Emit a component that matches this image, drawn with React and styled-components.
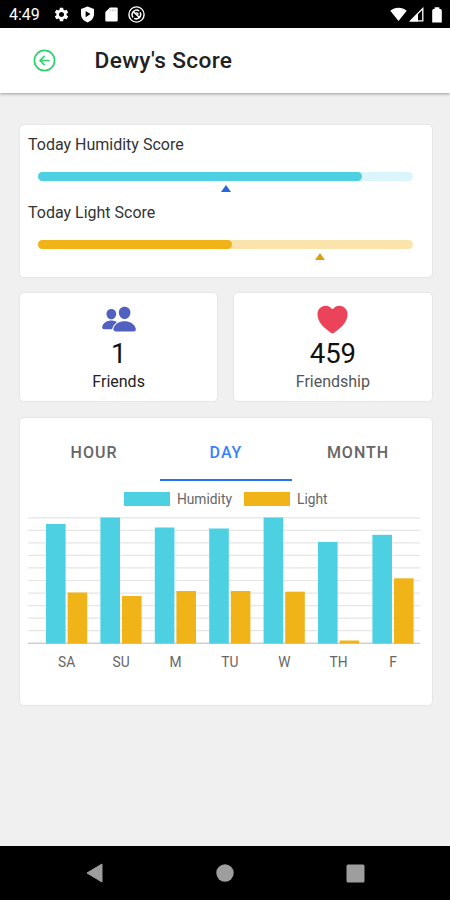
import styled, { createGlobalStyle } from 'styled-components';
import { IoArrowBackCircleOutline, IoHeart, IoPeople } from 'react-icons/io5';
import { MdSettings } from 'react-icons/md';

const GlobalStyle = createGlobalStyle`
	* {
		box-sizing: border-box;
	}

	body {
		margin: 0;
		background-color: #f0f0f0;
		font-family: Roboto, sans-serif;
		color: #222;
	}
`;

const Screen = styled.div`
	display: flex;
	flex-direction: column;
	width: 450px;
	height: 900px;
	background-color: #f0f0f0;
	overflow: hidden;
`;

const StatusBar = styled.div`
	display: flex;
	justify-content: space-between;
	height: 28px;
	padding: 0 8px 0 9px;
	background-color: #000;
	color: #fff;
`;

const StatusGroup = styled.div`
	display: flex;
	align-items: center;
	gap: ${props => props.$gap};
	padding-top: 1px;

	svg {
		display: block;
	}
`;

const Clock = styled.span`
	width: 33px;
	margin-right: 1px;
	font-size: 16px;
	font-weight: 400;
	white-space: nowrap;
`;

const Header = styled.header`
	display: flex;
	align-items: center;
	gap: 37px;
	height: 65px;
	flex-shrink: 0;
	padding: 0 0 1px 30.5px;
	background-color: #fff;
	box-shadow: 0 1px 3px rgba(0, 0, 0, 0.35);
`;

const BackButton = styled.button`
	display: flex;
	padding: 0;
	border: none;
	background: none;
	color: #2dd36f;
`;

const Title = styled.h1`
	margin: 0;
	font-size: 22.7px;
	font-weight: 500;
	letter-spacing: 0.35px;
	color: #222;
`;

const Content = styled.main`
	display: flex;
	flex-direction: column;
	gap: 15px;
	flex: 1;
	padding: 31px 17.5px 0 19px;
`;

const Card = styled.section`
	background-color: #fff;
	border: 1px solid #e4e6e7;
	border-radius: 5px;
`;

const ScoreCard = styled(Card)`
	height: 154px;
	margin-bottom: -1px;
	padding: 10px 18.5px 0 8px;
`;

const Score = styled.div`
	height: 67.5px;
`;

const ScoreLabel = styled.p`
	margin: 0;
	font-size: 16px;
	line-height: 20px;
	color: #333;
`;

const Track = styled.div`
	height: 9px;
	margin: 17px 0 0 10px;
	border-radius: 5px;
	background-color: ${props => props.$color};
`;

const Fill = styled.div`
	height: 100%;
	border-radius: 5px;
	background-color: ${props => props.$color};
`;

const MarkerRow = styled.div`
	display: flex;
	justify-content: center;
	width: ${props => props.$width};
	margin: 4px 0 0 10px;
`;

const Marker = styled.span`
	border: 5.5px solid transparent;
	border-top: 0;
	border-bottom: 7px solid ${props => props.$color};
`;

const StatRow = styled.div`
	display: grid;
	grid-template-columns: 1fr 1fr;
	gap: 15px;
`;

const StatCard = styled(Card)`
	display: flex;
	flex-direction: column;
	align-items: center;
	height: 110px;
	padding-top: 7px;
`;

const StatIcon = styled.div`
	display: flex;
	align-items: center;
	height: 38px;
	color: ${props => props.$color};
`;

const StatValue = styled.p`
	margin: 0;
	font-size: 27.5px;
	line-height: 32px;
	color: #111;
`;

const StatLabel = styled.p`
	margin: 2px 0 0;
	font-size: 16px;
	line-height: 20px;
	color: ${props => props.$color};
`;

const ChartCard = styled(Card)`
	height: 289px;
	padding: 8px 8px 0;
`;

const Tabs = styled.div`
	display: grid;
	grid-template-columns: repeat(3, 132px);
	height: 55px;
`;

const Tab = styled.button`
	padding: 0;
	border: none;
	border-bottom: 2px solid ${props => (props.$active ? '#2673f5' : 'transparent')};
	background: none;
	font-family: inherit;
	font-size: 16px;
	font-weight: 500;
	letter-spacing: 1px;
	color: ${props => (props.$active ? '#3880ff' : '#666')};
`;

const Legend = styled.div`
	display: flex;
	justify-content: center;
	gap: 12px;
	height: 36px;
	padding-top: 10px;
`;

const LegendItem = styled.div`
	display: flex;
	align-items: center;
	gap: 7px;
	height: 16px;
	font-size: 13.8px;
	color: #666;
`;

const Swatch = styled.span`
	width: 46px;
	height: 14px;
	background-color: ${props => props.$color};
`;

const Plot = styled.svg`
	display: block;
`;

const Days = styled.div`
	display: grid;
	grid-template-columns: repeat(7, 54.4px);
	margin: 9px 0 0 11.5px;
	font-size: 13.8px;
	line-height: 18px;
	text-align: center;
	color: #666;
`;

const NavBar = styled.nav`
	display: flex;
	align-items: center;
	justify-content: space-between;
	height: 54px;
	padding: 0 85px 0 86px;
	background-color: #000;
	color: #9e9e9e;
`;

const HUMIDITY = '#4dd0e1';
const LIGHT = '#f0b419';

// bar heights in pixels, the axis is 126 high
const week = [
	{ day: 'SA', humidity: 119.5, light: 51 },
	{ day: 'SU', humidity: 126, light: 47.5 },
	{ day: 'M', humidity: 116, light: 52.5 },
	{ day: 'TU', humidity: 115, light: 52.5 },
	{ day: 'W', humidity: 126, light: 51.8 },
	{ day: 'TH', humidity: 101.5, light: 3 },
	{ day: 'F', humidity: 108.7, light: 65.2 },
];

const scores = [
	{
		label: 'Today Humidity Score',
		fill: '86.3%',
		marker: '375px',
		color: '#4dd0e1',
		track: '#dbf6fa',
		markerColor: '#2468dc',
	},
	{
		label: 'Today Light Score',
		fill: '51.8%',
		marker: '563px',
		color: '#f0b419',
		track: '#fae4ab',
		markerColor: '#d9a012',
	},
];

function ShieldIcon() {
	return (
		<svg width='15' height='17' viewBox='0 0 15 17'>
			<path d='M7.5 .5 14 3v5c0 4-2.700 7-6.500 8.500C3.700 15 1 12 1 8V3z' fill='#fff' />
			<path d='M5.600 5v6.200l4.900-3.100z' fill='#000' />
		</svg>
	);
}

function StorageIcon() {
	return (
		<svg width='13' height='15' viewBox='0 0 13 15'>
			<path d='M5 .5h6.500a1.200 1.200 0 0 1 1.200 1.200v11.600a1.200 1.200 0 0 1-1.200 1.200h-10A1.200 1.200 0 0 1 .3 13.300V5z' fill='#fff' />
			<path d='M5.300 2.300v2M7.700 2.300v2M10 2.300v2' stroke='#999' strokeWidth='.7' />
		</svg>
	);
}

function SyncIcon() {
	return (
		<svg width='17' height='17' viewBox='0 0 17 17' fill='none' stroke='#fff'>
			<circle cx='8.500' cy='8.500' r='7.600' strokeWidth='1.400' />
			<path d='M5 11.500A4.600 4.600 0 0 1 11.300 5M12.200 6.200A4.600 4.600 0 0 1 6.200 12.400' strokeWidth='1.500' />
			<path d='M5 5.500l7 6.500M7.200 7.400c1.300-.9 3-.3 3 1.400' strokeWidth='1.400' />
		</svg>
	);
}

function Chart() {
	return (
		<Plot width='392' height='127' viewBox='0 0 392 127'>
			{Array.from({ length: 11 }, (_, i) => (
				<path
					key={i}
					d={`M0 ${0.8 + i * 12.54}H392`}
					stroke={i === 10 ? '#cfcfcf' : '#e5e5e5'}
					strokeWidth={i === 10 ? 1.6 : 1.2}
				/>
			))}
			{week.map(({ day, humidity, light }, i) => (
				<g key={day}>
					<rect x={18 + i * 54.4} y={126.5 - humidity} width='19.6' height={humidity} fill={HUMIDITY} />
					<rect x={39.6 + i * 54.4} y={126.5 - light} width='19.6' height={light} fill={LIGHT} />
				</g>
			))}
		</Plot>
	);
}

function App() {
	return (
		<Screen>
			<GlobalStyle />
			<StatusBar>
				<StatusGroup $gap='10px'>
					<Clock>4:49</Clock>
					<MdSettings size={17} />
					<ShieldIcon />
					<StorageIcon />
					<SyncIcon />
				</StatusGroup>
				<StatusGroup $gap='2px'>
					<svg width='17' height='15' viewBox='0 0 18 15'>
						<path d='M.3 3.500C5 -.6 13 -.6 17.700 3.500L9 14.500z' fill='#fff' />
					</svg>
					<svg width='21' height='15' viewBox='0 0 21 15'>
						<path d='M13.800 1.500v12.400H1.500z' fill='none' stroke='#fff' strokeWidth='1.300' />
						<path d='M1 14.500 9 6.500V14.500z' fill='#fff' />
					</svg>
					<svg width='10' height='16' viewBox='0 0 10 16'>
						<path d='M2.700 1.800V.3h4.600v1.500c1.500 0 2.500.8 2.500 2.200v11.500H.2V4c0-1.400 1-2.200 2.500-2.200z' fill='#fff' />
					</svg>
				</StatusGroup>
			</StatusBar>

			<Header>
				<BackButton aria-label='Back'>
					<IoArrowBackCircleOutline size={27} />
				</BackButton>
				<Title>Dewy's Score</Title>
			</Header>

			<Content>
				<ScoreCard>
					{scores.map(score => (
						<Score key={score.label}>
							<ScoreLabel>{score.label}</ScoreLabel>
							<Track $color={score.track}>
								<Fill $color={score.color} style={{ width: score.fill }} />
							</Track>
							<MarkerRow $width={score.marker}>
								<Marker $color={score.markerColor} />
							</MarkerRow>
						</Score>
					))}
				</ScoreCard>

				<StatRow>
					<StatCard>
						<StatIcon $color='#5260c0'>
							<IoPeople size={36} />
						</StatIcon>
						<StatValue>1</StatValue>
						<StatLabel $color='#222'>Friends</StatLabel>
					</StatCard>
					<StatCard>
						<StatIcon $color='#eb445a'>
							<IoHeart size={37} />
						</StatIcon>
						<StatValue>459</StatValue>
						<StatLabel $color='#555'>Friendship</StatLabel>
					</StatCard>
				</StatRow>

				<ChartCard>
					<Tabs>
						<Tab>HOUR</Tab>
						<Tab $active>DAY</Tab>
						<Tab>MONTH</Tab>
					</Tabs>
					<Legend>
						<LegendItem>
							<Swatch $color={HUMIDITY} />
							Humidity
						</LegendItem>
						<LegendItem>
							<Swatch $color={LIGHT} />
							Light
						</LegendItem>
					</Legend>
					<Chart />
					<Days>
						{week.map(({ day }) => (
							<span key={day}>{day}</span>
						))}
					</Days>
				</ChartCard>
			</Content>

			<NavBar>
				<svg width='17' height='20' viewBox='0 0 17 20'>
					<path d='M16 1v18L1 10z' fill='currentColor' stroke='currentColor' strokeLinejoin='round' />
				</svg>
				<svg width='18' height='18' viewBox='0 0 18 18'>
					<circle cx='9' cy='9' r='8.700' fill='currentColor' />
				</svg>
				<svg width='19' height='19' viewBox='0 0 19 19'>
					<rect x='.5' y='.5' width='18' height='18' rx='1.500' fill='currentColor' />
				</svg>
			</NavBar>
		</Screen>
	);
}

export default App;
